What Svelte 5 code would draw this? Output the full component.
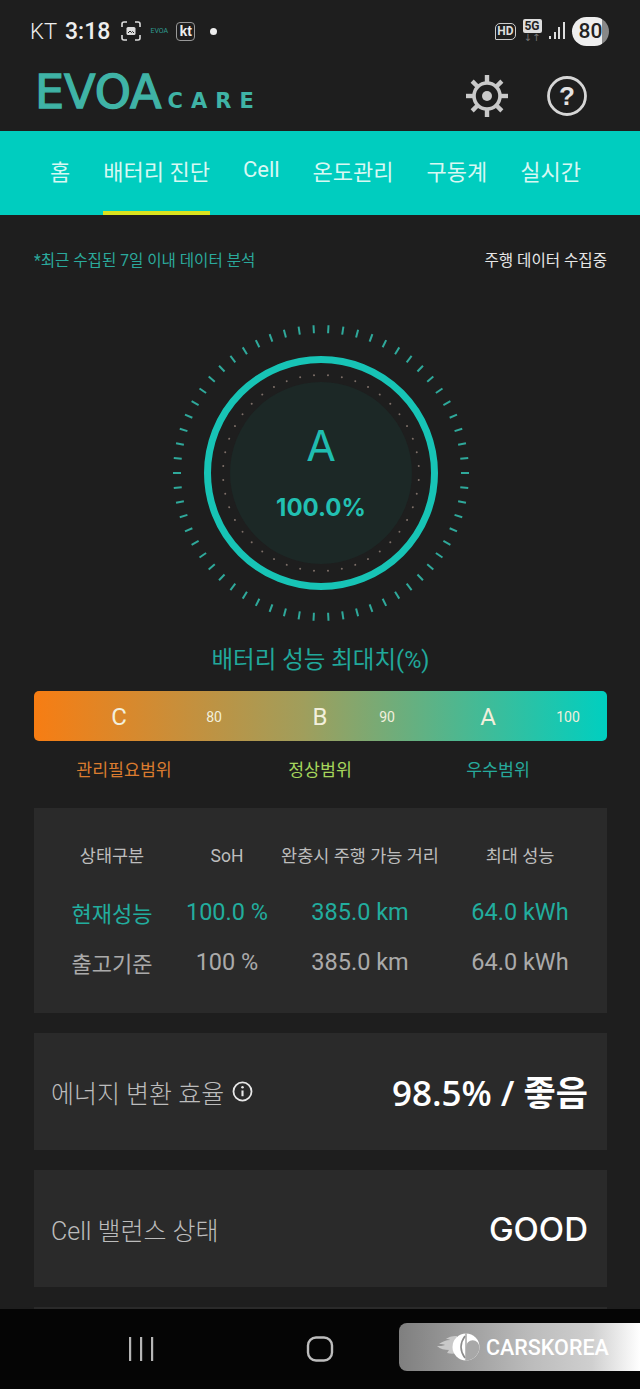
<script lang="ts">
  const tabs = ["홈", "배터리 진단", "Cell", "온도관리", "구동계", "실시간"];
  const active = 1;

  const rows = [
    { cls: "now", cells: ["현재성능", "100.0 %", "385.0 km", "64.0 kWh"] },
    { cls: "base", cells: ["출고기준", "100 %", "385.0 km", "64.0 kWh"] },
  ];
  const heads = ["상태구분", "SoH", "완충시 주행 가능 거리", "최대 성능"];

  const scale = ["C", "80", "B", "90", "A", "100"];

  // gauge marks: outer ticks and inner dots
  const ticks = Array.from({ length: 62 }, (_, i) => (i + 0.5) * (360 / 62));
  const dots = Array.from({ length: 44 }, (_, i) => (i + 0.5) * (360 / 44));
  const spokes = [0, 45, 90, 135, 180, 225, 270, 315];
</script>

<div class="phone">
  <div class="status">
    <span class="carrier">KT</span>
    <span class="clock">3:18</span>
    <svg class="st-shot" width="22" height="22" viewBox="0 0 22 22" fill="none" stroke="#ddd" stroke-width="1.6">
      <path d="M2 7V4q0-2 2-2h3M15 2h3q2 0 2 2v3M20 15v3q0 2-2 2h-3M7 20H4q-2 0-2-2v-3" />
      <rect x="6.5" y="7" width="9" height="8" rx="1.5" fill="#ddd" stroke="none" />
      <path d="M8 13l2-2 1.5 1.5 1-1 1.5 1.5" stroke="#222" stroke-width="1" />
    </svg>
    <span class="st-evoa">EVOA</span>
    <span class="st-kt">kt</span>
    <span class="st-dot"></span>
    <span class="st-right">
      <span class="st-hd">HD</span>
      <span class="st-5g"><b>5G</b><i>↓↑</i></span>
      <svg width="18" height="20" viewBox="0 0 18 20" fill="#ddd">
        <rect x="1" y="15" width="2" height="3" />
        <rect x="6" y="11" width="2" height="7" />
        <rect x="10" y="6" width="2" height="12" />
        <rect x="15" y="1" width="2" height="17" />
      </svg>
      <span class="st-batt">80</span>
    </span>
  </div>

  <header class="top">
    <div class="logo"><span class="evoa">EVOA</span><span class="care">CARE</span></div>
    <div class="top-icons">
      <svg width="46" height="48" viewBox="0 0 46 48">
        {#each spokes as a}
          <rect x="20.8" y="3" width="4.4" height="9" fill="#c9c9c9" transform="rotate({a} 23 24)" />
        {/each}
        <circle cx="23" cy="24" r="13" fill="#1e1e1e" stroke="#c9c9c9" stroke-width="3.6" />
        <circle cx="23" cy="24" r="5" fill="#c9c9c9" />
      </svg>
      <svg width="42" height="42" viewBox="0 0 42 42">
        <circle cx="21" cy="21" r="18.5" fill="none" stroke="#d6d6d6" stroke-width="2.8" />
        <text x="21" y="30" text-anchor="middle" class="qmark">?</text>
      </svg>
    </div>
  </header>

  <nav class="tabs">
    {#each tabs as t, i}
      <span class="tab" class:on={i === active}>{t}</span>
    {/each}
  </nav>

  <main class="body">
    <div class="note">
      <span class="note-l">*최근 수집된 7일 이내 데이터 분석</span>
      <span class="note-r">주행 데이터 수집중</span>
    </div>

    <div class="gauge">
      <svg width="300" height="300" viewBox="0 0 300 300">
        {#each ticks as a}
          <line x1="150" y1="2" x2="150" y2="10" class="tick" transform="rotate({a} 150 150)" />
        {/each}
        <circle cx="150" cy="150" r="113.5" class="ring" />
        {#each dots as a}
          <circle cx="150" cy="52" r="1" fill="#7d6f68" transform="rotate({a} 150 150)" />
        {/each}
        <circle cx="150" cy="150" r="91" fill="#1c2826" />
        <text x="150" y="138" text-anchor="middle" class="grade">A</text>
        <text x="150" y="193" text-anchor="middle" class="pct">100.0%</text>
      </svg>
    </div>

    <h2 class="title">배터리 성능 최대치(%)</h2>

    <div class="bar">
      {#each scale as s}
        <span class="mark" class:big={isNaN(Number(s))}>{s}</span>
      {/each}
    </div>

    <div class="ranges">
      <span class="r-c">관리필요범위</span>
      <span class="r-b">정상범위</span>
      <span class="r-a">우수범위</span>
    </div>

    <section class="card table">
      {#each heads as h}
        <span class="th">{h}</span>
      {/each}
      {#each rows as r}
        {#each r.cells as c, i}
          <span class="td {r.cls}" class:ko={i === 0}>{c}</span>
        {/each}
      {/each}
    </section>

    <section class="card line">
      <span class="label">
        에너지 변환 효율
        <svg width="21" height="21" viewBox="0 0 20 20" fill="none" stroke="#e8e8e8">
          <circle cx="10" cy="10" r="8.6" stroke-width="1.7" />
          <path d="M10 9v5.5" stroke-width="2" />
          <circle cx="10" cy="6" r="1.2" fill="#e8e8e8" stroke="none" />
        </svg>
      </span>
      <span class="value">98.5% / 좋음</span>
    </section>

    <section class="card line">
      <span class="label">Cell 밸런스 상태</span>
      <span class="value good">GOOD</span>
    </section>

    <section class="card line"></section>
  </main>

  <footer class="softkeys">
    <svg width="26" height="26" viewBox="0 0 26 26" fill="#b5b5b5">
      <rect x="1" y="1" width="2.2" height="24" />
      <rect x="12" y="1" width="2.2" height="24" />
      <rect x="23" y="1" width="2.2" height="24" />
    </svg>
    <svg width="28" height="28" viewBox="0 0 28 28" fill="none" stroke="#bdbdbd" stroke-width="2.4">
      <rect x="2" y="2.5" width="24" height="23" rx="8" />
    </svg>
    <div class="mark-co">
      <svg width="46" height="32" viewBox="0 0 46 32">
        <path d="M22 5c-6 0-8 1-11 3 2 0 3 0 4 1-4 0-8 2-11 4 3 0 5 0 6 1-2 1-5 1-8 1 3 3 8 4 12 4-1 1-1 2-2 3 4 1 7 1 10 0z" fill="#c9c9c9" />
        <circle cx="31" cy="16" r="13.5" fill="#fff" />
        <path d="M31 2.5v27" stroke="#8f8f8f" stroke-width="1.2" />
        <path d="M30 5q-8 11 0 22" fill="none" stroke="#8c8c8c" stroke-width="1.6" />
        <path d="M31 16a6.7 6.7 0 0 1 13.4 0 13.5 13.5 0 0 1-13.4 13.5z" fill="#a8a8a8" />
      </svg>
      <span>CARSKOREA</span>
    </div>
  </footer>
</div>

<style>
  :global(body) {
    margin: 0;
    background: #1e1e1e;
  }

  .phone {
    width: 640px;
    height: 1389px;
    display: flex;
    flex-direction: column;
    overflow: hidden;
    background: #1e1e1e;
    font-family: Roboto, "Noto Sans CJK KR", sans-serif;
  }

  /* status bar */
  .status {
    height: 62px;
    flex: none;
    box-sizing: border-box;
    padding: 0 30px;
    display: flex;
    align-items: center;
    color: #eee;
  }

  .carrier {
    font-size: 22px;
    font-weight: 300;
  }

  .clock {
    font-size: 23px;
    font-weight: 500;
    margin-left: 8px;
  }

  .st-shot {
    margin-left: 10px;
  }

  .st-evoa {
    margin-left: 7px;
    font-size: 7px;
    color: #2e9c90;
    width: 20px;
    text-align: center;
  }

  .st-kt {
    margin-left: 7px;
    width: 19px;
    height: 19px;
    box-sizing: border-box;
    border: 1px solid #999;
    border-radius: 4px;
    font: 700 14px/16px "Liberation Sans", sans-serif;
    text-align: center;
  }

  .st-dot {
    margin-left: 15px;
    width: 7px;
    height: 7px;
    border-radius: 50%;
    background: #eee;
  }

  .st-right {
    margin-left: auto;
    margin-right: 1px;
    display: flex;
    align-items: center;
    gap: 6px;
  }

  .st-hd {
    box-sizing: border-box;
    width: 21px;
    height: 17px;
    border: 1.5px solid #ccc;
    border-radius: 5px 5px 5px 1px;
    font: 700 12px/14px Roboto, sans-serif;
    text-align: center;
    color: #ddd;
  }

  .st-5g {
    display: flex;
    flex-direction: column;
    align-items: center;
    width: 20px;
    margin-top: -1px;
  }

  .st-5g b {
    width: 19px;
    height: 14px;
    border-radius: 2px;
    background: #ddd;
    color: #222;
    font: 700 12px/14px Roboto, sans-serif;
    text-align: center;
  }

  .st-5g i {
    font: normal 10px/9px "DejaVu Sans", sans-serif;
    color: #777;
  }

  .st-batt {
    width: 37px;
    height: 29px;
    border-radius: 15px;
    background: linear-gradient(90deg, #eee 82%, #888 82%);
    color: #222;
    font-size: 21px;
    font-weight: 500;
    line-height: 29px;
    text-align: center;
  }

  /* app header */
  .top {
    height: 69px;
    flex: none;
    box-sizing: border-box;
    padding: 0 52px 2px 35px;
    display: flex;
    align-items: center;
    justify-content: space-between;
  }

  .logo {
    display: flex;
    align-items: baseline;
    color: #3fb3a6;
    font-family: "DejaVu Sans", sans-serif;
    line-height: 1;
    margin-top: -8px;
  }

  .evoa {
    font-size: 46px;
    -webkit-text-stroke: 1.4px #3fb3a6;
  }

  .care {
    font-size: 21px;
    font-weight: 700;
    letter-spacing: 8px;
    margin-left: 6px;
    margin-right: -8px;
  }

  .top-icons {
    display: flex;
    align-items: center;
    gap: 36px;
  }

  .qmark {
    font: 700 26px "Liberation Sans", sans-serif;
    fill: #e2e2e2;
  }

  /* tabs */
  .tabs {
    height: 84px;
    flex: none;
    box-sizing: border-box;
    padding-left: 50px;
    display: flex;
    gap: 33px;
    background: #00cdbf;
  }

  .tab {
    display: flex;
    align-items: center;
    box-sizing: border-box;
    height: 84px;
    padding-bottom: 7px;
    font-size: 22px;
    color: #d8f8f3;
    white-space: nowrap;
  }

  .tab.on {
    border-bottom: 4px solid #dbe21e;
    padding-bottom: 3px;
  }

  /* body */
  .body {
    flex: 1;
    min-height: 0;
    overflow: hidden;
    box-sizing: border-box;
    padding: 0 33px 0 34px;
  }

  .note {
    height: 88px;
    display: flex;
    align-items: center;
    justify-content: space-between;
    font-size: 15.6px;
  }

  .note-l {
    color: #2ba99c;
  }

  .note-r {
    color: #e6e6e6;
  }

  .gauge {
    height: 300px;
    margin-top: 20px;
    display: flex;
    justify-content: center;
  }

  .tick {
    stroke: #2fa99b;
    stroke-width: 2;
  }

  .ring {
    fill: none;
    stroke: #17c4b6;
    stroke-width: 7;
  }

  .grade {
    font: 400 43px Inter, sans-serif;
    fill: #20bdb0;
  }

  .pct {
    font: 700 24px Inter, sans-serif;
    fill: #22c0b2;
  }

  .title {
    margin: 22px 0 0;
    height: 30px;
    font-size: 23.5px;
    line-height: 30px;
    font-weight: 400;
    text-align: center;
    color: #21a89b;
  }

  .bar {
    margin-top: 16px;
    height: 50px;
    border-radius: 5px;
    display: grid;
    grid-template-columns: 105px 95px 106px 67px 101px 80px;
    align-items: center;
    background: linear-gradient(90deg, #f77d13 0%, #a09e5c 47%, #00cfc0 100%);
  }

  .mark {
    justify-self: end;
    width: 40px;
    padding-top: 2px;
    text-align: center;
    font-size: 14px;
    color: #f2efdc;
  }

  .mark.big {
    font-size: 24px;
  }

  .ranges {
    margin-top: 18px;
    height: 22px;
    display: grid;
    grid-template-columns: 180px 212px 1fr;
    font-size: 17.3px;
    line-height: 22px;
    text-align: center;
  }

  .r-c {
    color: #da7b2f;
  }

  .r-b {
    color: #a6d65c;
  }

  .r-a {
    color: #27a99c;
    width: 144px;
  }

  .card {
    background: #2a2a2a;
  }

  .table {
    margin-top: 27px;
    height: 205px;
    box-sizing: border-box;
    padding-left: 28px;
    padding-top: 33px;
    display: grid;
    grid-template-columns: 115px 100px 166px 154px;
    grid-template-rows: 46px 50px 50px;
    align-items: center;
  }

  .th,
  .td {
    text-align: center;
    white-space: nowrap;
  }

  .th:nth-child(4n + 1),
  .td:nth-child(4n + 1) {
    padding-right: 15px;
  }

  .th {
    align-self: start;
    line-height: 30px;
    font-size: 17.5px;
    color: #bdbdbd;
  }

  .td {
    font-size: 23.5px;
  }

  .td.ko {
    font-size: 22px;
  }

  .td.now {
    color: #22ad9e;
  }

  .td.base {
    color: #aaa;
  }

  .line {
    margin-top: 20px;
    height: 117px;
    box-sizing: border-box;
    padding: 0 19px 0 17px;
    display: flex;
    align-items: center;
    justify-content: space-between;
  }

  .label {
    display: flex;
    align-items: center;
    gap: 8px;
    font-size: 25px;
    font-weight: 300;
    color: #bcbcbc;
  }

  .value {
    font-family: "Open Sans", "Noto Sans CJK KR", sans-serif;
    font-size: 35px;
    font-weight: 600;
    color: #fff;
    margin-top: -2px;
  }

  .value.good {
    font-family: Inter, sans-serif;
    font-size: 33px;
    font-weight: 500;
    margin-top: 0;
  }

  /* android nav + watermark */
  .softkeys {
    position: relative;
    height: 80px;
    flex: none;
    background: #050505;
    box-sizing: border-box;
    padding: 0 306px 0 128px;
    display: flex;
    align-items: center;
    justify-content: space-between;
  }

  .mark-co {
    position: absolute;
    left: 399px;
    right: 0;
    top: 14px;
    height: 48px;
    border-radius: 8px 0 0 8px;
    display: flex;
    align-items: center;
    gap: 5px;
    padding-left: 36px;
    box-sizing: border-box;
    background: linear-gradient(90deg, #7f7f7f 0%, #bcbcbc 55%, #cfcfcf 80%, #fff 100%);
    font-size: 21.5px;
    font-weight: 500;
    color: #fff;
  }
</style>
